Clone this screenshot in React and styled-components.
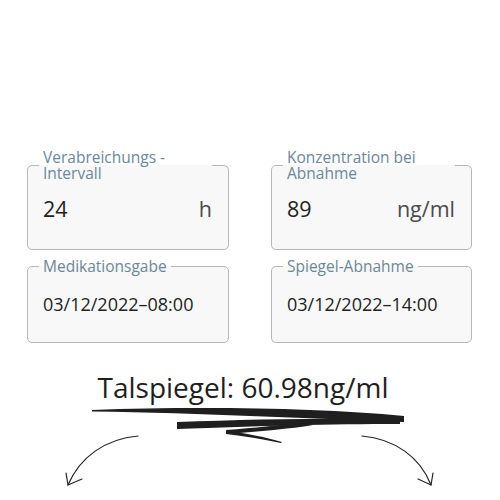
import React from "react";
import styled, { createGlobalStyle } from "styled-components";

const Global = createGlobalStyle`
  html, body { margin: 0; padding: 0; background: #fff; }
  body { font-family: "Open Sans", "Noto Sans", sans-serif; color: #222; }
`;

const Page = styled.div`
  width: 500px;
  padding-top: 149px;
  box-sizing: border-box;
`;

const Grid = styled.div`
  display: grid;
  grid-template-columns: 202px 201px;
  column-gap: 42px;
  row-gap: 8px;
  padding-left: 27px;
  align-items: end;
`;

const Field = styled.fieldset`
  margin: 0;
  padding: 0 16px 0 15px;
  border: 1px solid #b7b7b7;
  border-radius: 5px;
  background: #f8f8f8;
  min-width: 0;
`;

const Legend = styled.legend`
  margin-left: -4px;
  padding: 0 4px;
  max-width: 172px;
  font-size: 15.5px;
  line-height: 16px;
  color: #6a8899;
`;

const ValueRow = styled.div`
  display: flex;
  justify-content: space-between;
  align-items: center;
  height: 24px;
  padding: ${(p) => (p.$large ? "16px 0 28px" : "18px 0 26px")};
  font-size: ${(p) => (p.$large ? "21.5px" : "18px")};
  line-height: 24px;
  color: #222;
`;

const Unit = styled.span`
  color: #4a4a4a;
`;

const Result = styled.div`
  margin-top: 26px;
  padding-right: 14px;
  text-align: center;
  font-size: 28px;
  line-height: 36px;
  color: #1e1e1e;
`;

const Decoration = styled.svg`
  display: block;
  margin-top: -1px;
`;

function Box({ label, value, unit }) {
  return (
    <Field>
      <Legend>{label}</Legend>
      <ValueRow $large={!!unit}>
        <span>{value}</span>
        {unit && <Unit>{unit}</Unit>}
      </ValueRow>
    </Field>
  );
}

export default function App() {
  return (
    <>
      <Global />
      <Page>
        <Grid>
          <Box label="Verabreichungs - Intervall" value="24" unit="h" />
          <Box label="Konzentration bei Abnahme" value="89" unit="ng/ml" />
          <Box label="Medikationsgabe" value="03/12/2022–08:00" />
          <Box label="Spiegel-Abnahme" value="03/12/2022–14:00" />
        </Grid>
        <Result>Talspiegel: 60.98ng/ml</Result>
        <Decoration width="500" height="90" viewBox="0 405 500 90">
          <g fill="#1f1f1f">
            <path d="M92 411 C200 407 320 409 404 417 L404 423 C320 420 200 414 92 412.5 Z" />
            <path d="M177 423 C250 420 330 419 400 420 L400 425 C330 425 260 427 177 430 Z" />
            <path d="M298 424 L313 426 C290 430 260 432 227 435 L226 431 C255 429 280 426 298 424 Z" />
            <path d="M226 432 C245 434 265 438 282 443 L281 444 C262 440 244 437 226 435 Z" />
          </g>
          <g fill="none" stroke="#222" strokeWidth="1.2" strokeLinecap="round">
            <path d="M138 437 C105 440 80 458 68 486" />
            <path d="M66 474 L68 486 L82 480" />
            <path d="M362 437 C395 440 420 458 431 486" />
            <path d="M433 474 L431 486 L418 480" />
          </g>
        </Decoration>
      </Page>
    </>
  );
}
